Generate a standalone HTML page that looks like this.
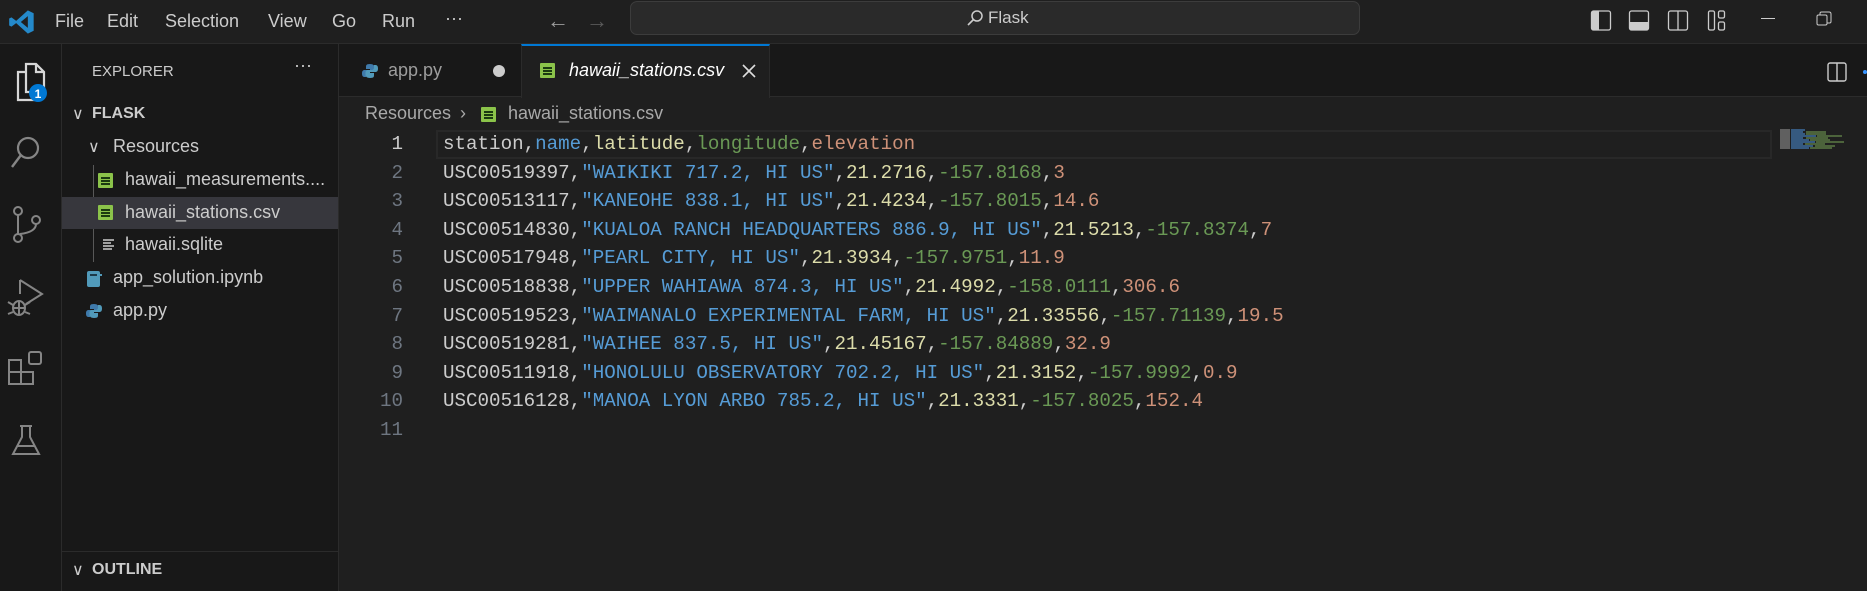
<!DOCTYPE html>
<html><head><meta charset="utf-8"><style>
*{margin:0;padding:0;box-sizing:border-box}
body{width:1867px;height:591px;background:#1f1f1f;overflow:hidden;position:relative;font-family:"Liberation Sans",sans-serif;color:#cccccc}
.a{position:absolute;white-space:nowrap}
#title{left:0;top:0;width:1867px;height:44px;background:#1f1f1f;border-bottom:1px solid #2b2b2b}
.menu{font-size:18px;color:#cccccc;top:11px}
#act{left:0;top:44px;width:62px;height:547px;background:#181818;border-right:1px solid #2b2b2b}
#side{left:62px;top:44px;width:277px;height:547px;background:#181818;border-right:1px solid #2b2b2b}
#tabs{left:339px;top:44px;width:1528px;height:53px;background:#181818;border-bottom:1px solid #2b2b2b}
.st{font-size:18px;color:#cccccc}
.code{font-family:"Liberation Mono",monospace;font-size:19.2px;color:#cccccc;line-height:28.6px}
.ln{font-family:"Liberation Mono",monospace;font-size:19.2px;color:#6e7681;line-height:28.6px;text-align:right;width:60px}
.b{color:#569cd6}.y{color:#dcdcaa}.g{color:#6a9955}.o{color:#ce9178}
.csv{display:block;width:15px;height:15px;background:#8bc34a;border-radius:1px}
.csv:after{content:"";position:absolute;left:3px;top:3px;width:9px;height:9px;background:repeating-linear-gradient(#8bc34a 0 1px,#1a3a10 1px 3px)}
</style></head><body>
<div class="a" id="title"></div>
<svg class="a" style="left:8px;top:8px" width="28" height="28" viewBox="0 0 24 24"><path d="M17 2l5 2.5v15L17 22 7 13l-4 3-2-1V9l2-1 4 3 10-9zM17 7l-6 5 6 5z" fill="#2489ca"/></svg>
<div class="a menu" style="left:55px">File</div>
<div class="a menu" style="left:107px">Edit</div>
<div class="a menu" style="left:165px">Selection</div>
<div class="a menu" style="left:268px">View</div>
<div class="a menu" style="left:332px">Go</div>
<div class="a menu" style="left:382px">Run</div>
<div class="a menu" style="left:445px;top:8px">···</div>
<div class="a" style="left:547px;top:8px;font-size:22px;color:#9d9d9d">←</div>
<div class="a" style="left:586px;top:8px;font-size:22px;color:#5a5a5a">→</div>
<div class="a" style="left:630px;top:1px;width:730px;height:34px;background:#2a2a2a;border:1px solid #3c3c3c;border-radius:7px"></div>
<svg class="a" style="left:966px;top:9px" width="18" height="18" viewBox="0 0 18 18"><circle cx="11" cy="7" r="5" fill="none" stroke="#ccc" stroke-width="1.5"/><path d="M7.5 10.5L2 16" stroke="#ccc" stroke-width="1.6"/></svg>
<div class="a" style="left:988px;top:8px;font-size:17px;color:#cccccc">Flask</div>
<svg class="a" style="left:1590px;top:8px" width="150" height="24" viewBox="0 0 150 24">
<rect x="1.5" y="3" width="19" height="19" rx="2" fill="none" stroke="#ccc" stroke-width="1.3"/><rect x="2" y="3.5" width="7" height="18" fill="#ccc"/>
<rect x="39.5" y="3" width="19" height="19" rx="2" fill="none" stroke="#ccc" stroke-width="1.3"/><rect x="40" y="14" width="18" height="7.5" fill="#ccc"/>
<rect x="78.5" y="3" width="19" height="19" rx="2" fill="none" stroke="#ccc" stroke-width="1.3"/><path d="M88 3v19" stroke="#ccc" stroke-width="1.3"/>
<rect x="118.5" y="3" width="6" height="19" rx="1.5" fill="none" stroke="#ccc" stroke-width="1.3"/><rect x="128.5" y="3" width="6" height="7" rx="1.5" fill="none" stroke="#ccc" stroke-width="1.3"/><rect x="128.5" y="14" width="6" height="8" rx="1.5" fill="none" stroke="#ccc" stroke-width="1.3"/>
</svg>
<div class="a" style="left:1761px;top:18px;width:14px;height:1px;background:#ccc"></div>
<svg class="a" style="left:1816px;top:11px" width="16" height="16" viewBox="0 0 16 16"><rect x="1" y="4" width="10" height="10" rx="1.5" fill="none" stroke="#ccc"/><path d="M4 4V2.5Q4 1 5.5 1H13Q15 1 15 3v7.5Q15 12 13.5 12H11" fill="none" stroke="#ccc"/></svg>

<div class="a" id="act"></div>
<svg class="a" style="left:10px;top:60px" width="40" height="46" viewBox="0 0 40 46">
<path d="M16 4h10l8 8v20h-18z M26 4v8h8" fill="none" stroke="#d7d7d7" stroke-width="2.2"/><path d="M16 12H8v28h18v-8" fill="none" stroke="#d7d7d7" stroke-width="2.2"/>
<circle cx="28" cy="33" r="9" fill="#0078d4"/><text x="28" y="38" font-size="12" fill="#fff" font-weight="bold" text-anchor="middle" font-family="Liberation Sans">1</text></svg>
<svg class="a" style="left:10px;top:134px" width="32" height="38" viewBox="0 0 32 38"><circle cx="18" cy="14" r="10" fill="none" stroke="#858585" stroke-width="2.2"/><path d="M11 21L2 33" stroke="#858585" stroke-width="2.4"/></svg>
<svg class="a" style="left:10px;top:205px" width="34" height="40" viewBox="0 0 34 40"><circle cx="8" cy="6" r="4" fill="none" stroke="#858585" stroke-width="2"/><circle cx="8" cy="33" r="4" fill="none" stroke="#858585" stroke-width="2"/><circle cx="26" cy="15" r="4" fill="none" stroke="#858585" stroke-width="2"/><path d="M8 10v19M26 19q0 8-16 10" fill="none" stroke="#858585" stroke-width="2"/></svg>
<svg class="a" style="left:6px;top:278px" width="40" height="40" viewBox="0 0 40 40"><path d="M14 2v14M14 2l22 14-16 10" fill="none" stroke="#858585" stroke-width="2"/><ellipse cx="13" cy="30" rx="6" ry="7" fill="none" stroke="#858585" stroke-width="2"/><path d="M2 24l5 3M2 36l5-2M24 24l-5 3M24 36l-5-2M13 24v13M8 30h10" stroke="#858585" stroke-width="2"/></svg>
<svg class="a" style="left:7px;top:350px" width="40" height="40" viewBox="0 0 40 40"><path d="M2 10h12v12H2zM2 22h12v12H2zM14 22h12v12H14z" fill="none" stroke="#858585" stroke-width="2"/><rect x="22" y="2" width="12" height="12" rx="2" fill="none" stroke="#858585" stroke-width="2"/></svg>
<svg class="a" style="left:10px;top:424px" width="32" height="34" viewBox="0 0 32 34"><path d="M10 2h12M12 2v11L3 30h26L20 13V2M7 22h18" fill="none" stroke="#858585" stroke-width="2"/></svg>

<div class="a" id="side"></div>
<div class="a" style="left:92px;top:63px;font-size:15px;color:#cccccc">EXPLORER</div>
<div class="a" style="left:294px;top:55px;font-size:18px;color:#cccccc">···</div>
<div class="a" style="left:72px;top:104px;font-size:16px;color:#ccc">∨</div>
<div class="a" style="left:92px;top:105px;font-size:16px;font-weight:bold;color:#cccccc">FLASK</div>
<div class="a" style="left:88px;top:137px;font-size:16px;color:#ccc">∨</div>
<div class="a st" style="left:113px;top:136px">Resources</div>
<div class="a" style="left:93px;top:165px;width:1px;height:97px;background:#585858"></div>
<div class="a" style="left:62px;top:197px;width:276px;height:32px;background:#37373d"></div>
<span class="a csv" style="left:98px;top:173px"></span>
<div class="a st" style="left:125px;top:169px">hawaii_measurements....</div>
<span class="a csv" style="left:98px;top:205px"></span>
<div class="a st" style="left:125px;top:202px">hawaii_stations.csv</div>
<svg class="a" style="left:102px;top:238px" width="14" height="14" viewBox="0 0 14 14"><path d="M1 2h11M1 5h8M1 8h11M1 11h9" stroke="#ccc" stroke-width="1.5"/></svg>
<div class="a st" style="left:125px;top:234px">hawaii.sqlite</div>
<svg class="a" style="left:86px;top:270px" width="16" height="18" viewBox="0 0 16 18"><rect x="1" y="1" width="13" height="16" rx="2" fill="#519aba"/><rect x="13" y="4" width="3" height="2" fill="#519aba"/><rect x="4" y="4" width="7" height="2" fill="#1d3a4a"/></svg>
<div class="a st" style="left:113px;top:267px">app_solution.ipynb</div>
<svg class="a" style="left:86px;top:303px" width="16" height="16" viewBox="0 0 16 16"><path d="M8 1C4 1 4 2.5 4 4v2h4v1H2.5C1 7 0 8 0 10.5S1 14 2.5 14H4v-2.5c0-1.5 1-2.5 2.5-2.5h3.5c1.5 0 2.5-1 2.5-2.5V4c0-1.5-1.5-3-4.5-3z" fill="#3f7aab"/><path d="M8 15c4 0 4-1.5 4-3v-2H8V9h5.5C15 9 16 8 16 5.5S15 2 13.5 2H12v2.5c0 1.5-1 2.5-2.5 2.5H6C4.5 7 3.5 8 3.5 9.5V12c0 1.5 1.5 3 4.5 3z" fill="#519aba"/></svg>
<div class="a st" style="left:113px;top:300px">app.py</div>
<div class="a" style="left:62px;top:551px;width:277px;height:1px;background:#2b2b2b"></div>
<div class="a" style="left:72px;top:560px;font-size:16px;color:#ccc">∨</div>
<div class="a" style="left:92px;top:561px;font-size:16px;font-weight:bold;color:#cccccc">OUTLINE</div>

<div class="a" id="tabs"></div>
<div class="a" style="left:521px;top:44px;width:249px;height:54px;background:#1f1f1f;border-top:2px solid #0078d4;border-left:1px solid #2b2b2b;border-right:1px solid #2b2b2b"></div>
<svg class="a" style="left:362px;top:63px" width="16" height="16" viewBox="0 0 16 16"><path d="M8 1C4 1 4 2.5 4 4v2h4v1H2.5C1 7 0 8 0 10.5S1 14 2.5 14H4v-2.5c0-1.5 1-2.5 2.5-2.5h3.5c1.5 0 2.5-1 2.5-2.5V4c0-1.5-1.5-3-4.5-3z" fill="#3f7aab"/><path d="M8 15c4 0 4-1.5 4-3v-2H8V9h5.5C15 9 16 8 16 5.5S15 2 13.5 2H12v2.5c0 1.5-1 2.5-2.5 2.5H6C4.5 7 3.5 8 3.5 9.5V12c0 1.5 1.5 3 4.5 3z" fill="#519aba"/></svg>
<div class="a" style="left:388px;top:60px;font-size:18px;color:#9d9d9d">app.py</div>
<div class="a" style="left:493px;top:65px;width:12px;height:12px;border-radius:50%;background:#cccccc"></div>
<span class="a csv" style="left:540px;top:63px"></span>
<div class="a" style="left:569px;top:60px;font-size:18px;font-style:italic;color:#ffffff">hawaii_stations.csv</div>
<svg class="a" style="left:742px;top:64px" width="14" height="14" viewBox="0 0 14 14"><path d="M1 1l12 12M13 1L1 13" stroke="#ddd" stroke-width="1.6"/></svg>
<svg class="a" style="left:1827px;top:62px" width="20" height="20" viewBox="0 0 20 20"><rect x="1" y="1" width="18" height="18" rx="2" fill="none" stroke="#ccc" stroke-width="1.4"/><path d="M10 1v18" stroke="#ccc" stroke-width="1.4"/></svg>
<div class="a" style="left:1863px;top:70px;width:4px;height:4px;background:#3794ff;border-radius:50%"></div>

<div class="a" style="left:365px;top:103px;font-size:18px;color:#a9a9a9">Resources <span style="margin:0 4px">›</span></div>
<span class="a csv" style="left:481px;top:107px"></span>
<div class="a" style="left:508px;top:103px;font-size:18px;color:#a9a9a9">hawaii_stations.csv</div>

<div class="a" style="left:436px;top:130px;width:1336px;height:29px;border:2px solid #282828"></div>
<div class="a ln" style="left:343px;top:130px"><span style="color:#cccccc">1</span><br>2<br>3<br>4<br>5<br>6<br>7<br>8<br>9<br>10<br>11</div>
<div class="a code" style="left:443px;top:130px">station,<span class="b">name</span>,<span class="y">latitude</span>,<span class="g">longitude</span>,<span class="o">elevation</span><br>
USC00519397,<span class="b">"WAIKIKI 717.2, HI US"</span>,<span class="y">21.2716</span>,<span class="g">-157.8168</span>,<span class="o">3</span><br>
USC00513117,<span class="b">"KANEOHE 838.1, HI US"</span>,<span class="y">21.4234</span>,<span class="g">-157.8015</span>,<span class="o">14.6</span><br>
USC00514830,<span class="b">"KUALOA RANCH HEADQUARTERS 886.9, HI US"</span>,<span class="y">21.5213</span>,<span class="g">-157.8374</span>,<span class="o">7</span><br>
USC00517948,<span class="b">"PEARL CITY, HI US"</span>,<span class="y">21.3934</span>,<span class="g">-157.9751</span>,<span class="o">11.9</span><br>
USC00518838,<span class="b">"UPPER WAHIAWA 874.3, HI US"</span>,<span class="y">21.4992</span>,<span class="g">-158.0111</span>,<span class="o">306.6</span><br>
USC00519523,<span class="b">"WAIMANALO EXPERIMENTAL FARM, HI US"</span>,<span class="y">21.33556</span>,<span class="g">-157.71139</span>,<span class="o">19.5</span><br>
USC00519281,<span class="b">"WAIHEE 837.5, HI US"</span>,<span class="y">21.45167</span>,<span class="g">-157.84889</span>,<span class="o">32.9</span><br>
USC00511918,<span class="b">"HONOLULU OBSERVATORY 702.2, HI US"</span>,<span class="y">21.3152</span>,<span class="g">-157.9992</span>,<span class="o">0.9</span><br>
USC00516128,<span class="b">"MANOA LYON ARBO 785.2, HI US"</span>,<span class="y">21.3331</span>,<span class="g">-157.8025</span>,<span class="o">152.4</span></div>
<svg class="a" style="left:1780px;top:129px" width="80" height="22" viewBox="0 0 80 22">
<g stroke-width="1.4"><path d="M0 1h10M0 3h10M0 5h10M0 7h10M0 9h10M0 11h10M0 13h10M0 15h10M0 17h10M0 19h10" stroke="#777"/>
<path d="M11 1h14M11 3h12M11 5h14M11 7h25M11 9h12M11 11h18M11 13h24M11 15h12M11 17h22M11 19h18" stroke="#3f6fa0"/>
<path d="M26 3h20M26 5h20M37 7h25M26 9h22M30 11h20M36 13h28M25 15h20M35 17h20M30 19h22" stroke="#5b7a45"/></g></svg>
</body></html>
